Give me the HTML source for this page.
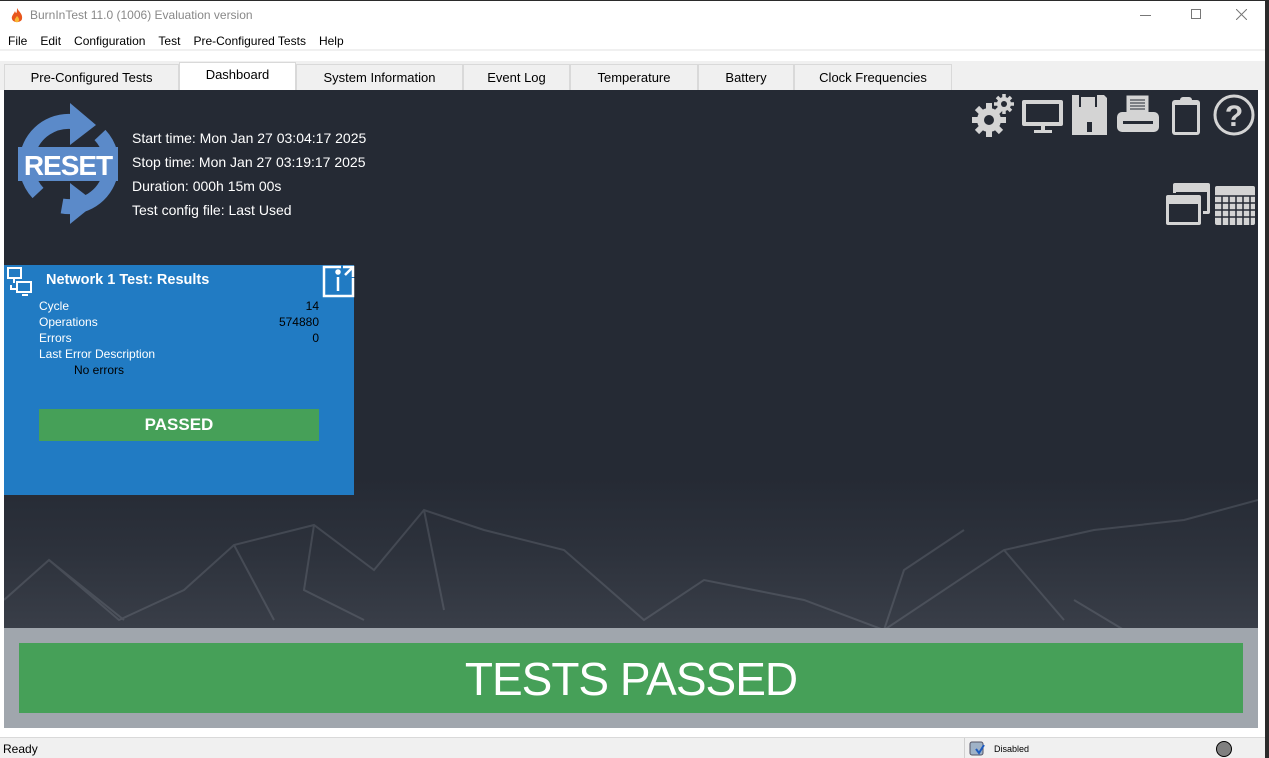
<!DOCTYPE html>
<html><head><meta charset="utf-8"><style>
*{margin:0;padding:0;box-sizing:border-box}
body{width:1269px;height:758px;overflow:hidden;background:#fff;font-family:"Liberation Sans",sans-serif;position:relative;font-size:12px}
.abs{position:absolute}
.menu span{margin-right:13px}
.tab{position:absolute;top:64px;height:26px;background:#f0f0f0;border:1px solid #d9d9d9;border-bottom:none;font-size:13px;color:#000;text-align:center;line-height:26px}
.w{color:#fff;font-size:14px}
.card{font-size:12px;color:#fff}
</style></head><body>
<div class="abs" style="left:1265px;top:0;width:4px;height:758px;background:#2b2b2b"></div>
<div class="abs" style="left:0;top:0;width:1265px;height:1px;background:#2b2b2b"></div>
<svg class="abs" style="left:10px;top:8px" width="14" height="16" viewBox="0 0 14 16"><path d="M7 0C9 4 13 6 12 11C11 15 3 15 2 11C1 8 4 6 5 3C6 6 7 6 7 0Z" fill="#e8561c"/><path d="M7 8C9 10 10 12 8 14C6 15 4 13 5 11Z" fill="#f7b733"/></svg>
<div class="abs" style="left:30px;top:8px;font-size:12px;color:#888">BurnInTest 11.0 (1006) Evaluation version</div>
<div class="abs" style="left:1140px;top:15px;width:11px;height:1px;background:#777"></div>
<div class="abs" style="left:1191px;top:9px;width:10px;height:10px;border:1px solid #777"></div>
<svg class="abs" style="left:1236px;top:9px" width="11" height="11"><path d="M0 0L11 11M11 0L0 11" stroke="#777" stroke-width="1"/></svg>
<div class="abs menu" style="left:8px;top:34px;font-size:12px;color:#000"><span>File</span><span>Edit</span><span>Configuration</span><span>Test</span><span>Pre-Configured Tests</span><span>Help</span></div>
<div class="abs" style="left:0;top:49px;width:1265px;height:2px;background:#f0f0f0"></div>
<div class="abs" style="left:0;top:61px;width:1265px;height:29px;background:#f0f0f0"></div>
<div class="tab" style="left:4px;width:175px">Pre-Configured Tests</div>
<div class="tab" style="left:179px;width:117px;top:62px;height:28px;background:#fff;line-height:24px">Dashboard</div>
<div class="tab" style="left:296px;width:167px">System Information</div>
<div class="tab" style="left:463px;width:107px">Event Log</div>
<div class="tab" style="left:570px;width:128px">Temperature</div>
<div class="tab" style="left:698px;width:96px">Battery</div>
<div class="tab" style="left:794px;width:158px">Clock Frequencies</div>
<div class="abs" style="left:4px;top:90px;width:1254px;height:538px;background:linear-gradient(180deg,#252a34 0%,#252a34 72%,#2d323c 86%,#393e48 100%)"></div>
<svg class="abs" style="left:4px;top:470px" width="1254" height="158" opacity="0.18"><g stroke="#b0b6c0" stroke-width="2" fill="none"><path d="M0 130L45 90L115 150L180 120L230 75L310 55L370 100L420 40L480 60L560 80L640 150L700 110L800 130L880 160L1000 80L1090 60L1180 50L1254 30"/><path d="M45 90L120 150M230 75L270 150M310 55L300 120L360 150M420 40L440 140M1070 130L1120 160M1000 80L1060 150M880 160L900 100L960 60"/></g></svg>
<div class="abs" style="left:4px;top:628px;width:1254px;height:100px;background:#a0a6ad"></div>
<div class="abs" style="left:19px;top:643px;width:1224px;height:70px;background:#46a058;color:#fff;font-size:46px;text-align:center;line-height:72px;letter-spacing:-1px">TESTS PASSED</div>
<!-- reset -->
<svg class="abs" style="left:14px;top:103px" width="110" height="122" viewBox="0 0 110 122">
<path d="M14 50A42 42 0 0 1 62 19" stroke="#5b8ac9" stroke-width="15" fill="none"/>
<path d="M96 72A42 42 0 0 1 48 103" stroke="#5b8ac9" stroke-width="15" fill="none"/>
<path d="M96 50A42 42 0 0 0 86 32" stroke="#5b8ac9" stroke-width="15" fill="none"/>
<path d="M14 72A42 42 0 0 0 24 90" stroke="#5b8ac9" stroke-width="15" fill="none"/>
<path d="M56 0L82 22L56 42Z" fill="#5b8ac9"/><path d="M56 80L82 100L56 121Z" fill="#5b8ac9"/>
<path d="M4 44h100v34h-100z" fill="#5b8ac9"/>
<text x="54" y="72" fill="#fff" font-family="Liberation Sans" font-weight="bold" font-size="28" text-anchor="middle" letter-spacing="-1">RESET</text></svg>
<div class="abs w" style="left:132px;top:126px;line-height:24px">Start time: Mon Jan 27 03:04:17 2025<br>Stop time: Mon Jan 27 03:19:17 2025<br>Duration: 000h 15m 00s<br>Test config file: Last Used</div>
<svg class="abs" style="left:970px;top:92px" width="290" height="136" fill="#d4d4d4">
<g transform="translate(19,28)"><circle r="12"/><g stroke="#d4d4d4" stroke-width="6"><path d="M0 -17v34M-17 0h34M-12 -12l24 24M12 -12l-24 24"/></g><circle r="5" fill="#252a34"/></g>
<g transform="translate(34,12)"><circle r="7"/><g stroke="#d4d4d4" stroke-width="3.5"><path d="M0 -10v20M-10 0h20M-7 -7l14 14M7 -7l-14 14"/></g><circle r="3" fill="#252a34"/></g>
<rect x="52" y="8" width="41" height="26" rx="2"/><rect x="56" y="12" width="33" height="18" fill="#252a34"/><rect x="71" y="34" width="4" height="6"/><rect x="64" y="38" width="18" height="3"/>
<path d="M102 3h32l3 3v37h-35z"/><rect x="109" y="3" width="18" height="12" fill="#252a34"/><rect x="111" y="5" width="14" height="10" fill="#d4d4d4"/><rect x="117" y="30" width="5" height="10" fill="#252a34"/>
<rect x="156" y="3" width="23" height="18" fill="#d4d4d4" stroke="#252a34" stroke-width="1"/><g stroke="#252a34"><path d="M160 8h15M160 11h15M160 14h15M160 17h15"/></g><rect x="147" y="20" width="42" height="20" rx="5"/><rect x="153" y="29" width="30" height="3" fill="#252a34"/>
<rect x="202" y="8" width="28" height="35" rx="3"/><rect x="205" y="13" width="22" height="27" fill="#252a34"/><rect x="210" y="5" width="12" height="8" rx="3"/>
<circle cx="264" cy="23" r="19" fill="none" stroke="#d4d4d4" stroke-width="3"/><text x="264" y="34" font-family="Liberation Sans" font-weight="bold" font-size="30" text-anchor="middle">?</text>
<rect x="203" y="91" width="37" height="31" rx="2"/><rect x="206" y="100" width="31" height="19" fill="#252a34"/>
<rect x="194" y="101" width="39" height="33" rx="2" fill="#252a34"/><rect x="196" y="103" width="35" height="30" rx="2"/><rect x="199" y="112" width="29" height="18" fill="#252a34"/>
<rect x="245" y="94" width="40" height="39" rx="2"/><g stroke="#252a34" stroke-width="1.5"><path d="M245 104h40M245 111h40M245 118h40M245 125h40M252 104v29M259 104v29M266 104v29M273 104v29M280 104v29"/></g>
</svg>
<div class="abs" style="left:4px;top:265px;width:350px;height:230px;background:#217bc3"></div>
<svg class="abs" style="left:6px;top:267px" width="30" height="30" fill="none" stroke="#fff" stroke-width="2"><rect x="2" y="1" width="13" height="10"/><path d="M8 11v5M5 18v4h5"/><rect x="11" y="15" width="14" height="10"/><path d="M16 28h6"/></svg>
<svg class="abs" style="left:321px;top:264px" width="34" height="34" fill="none" stroke="#fff" stroke-width="2.5"><path d="M20 3H3v29h29V14"/><path d="M22 3h10v10M32 3L24 11"/><path d="M17 13v14"/><circle cx="17" cy="8" r="1.5" fill="#fff"/></svg>
<div class="abs" style="left:46px;top:272px;color:#fff;font-weight:bold;font-size:14.5px">Network 1 Test: Results</div>
<div class="abs card" style="left:39px;top:298px;line-height:16px;width:280px">
<div>Cycle<span style="float:right;color:#000">14</span></div>
<div>Operations<span style="float:right;color:#000">574880</span></div>
<div>Errors<span style="float:right;color:#000">0</span></div>
<div>Last Error Description</div>
<div style="padding-left:35px;color:#000">No errors</div></div>
<div class="abs" style="left:39px;top:409px;width:280px;height:32px;background:#46a058;color:#fff;font-weight:bold;font-size:17px;text-align:center;line-height:32px">PASSED</div>
<div class="abs" style="left:0;top:737px;width:1265px;height:21px;background:#f0f0f0;border-top:1px solid #d9d9d9"></div>
<div class="abs" style="left:3px;top:742px;font-size:12px">Ready</div>
<div class="abs" style="left:964px;top:738px;width:1px;height:20px;background:#d0d0d0"></div>
<svg class="abs" style="left:968px;top:740px" width="18" height="17"><rect x="2" y="2" width="13" height="13" rx="2" fill="#9fb2c7" stroke="#556" /><path d="M8 9l3 4 5-8" stroke="#1d5bbf" stroke-width="2" fill="none"/></svg>
<div class="abs" style="left:994px;top:744px;font-size:9px">Disabled</div>
<div class="abs" style="left:1216px;top:741px;width:16px;height:16px;border-radius:50%;background:#808080;border:1px solid #000"></div>
</body></html>
